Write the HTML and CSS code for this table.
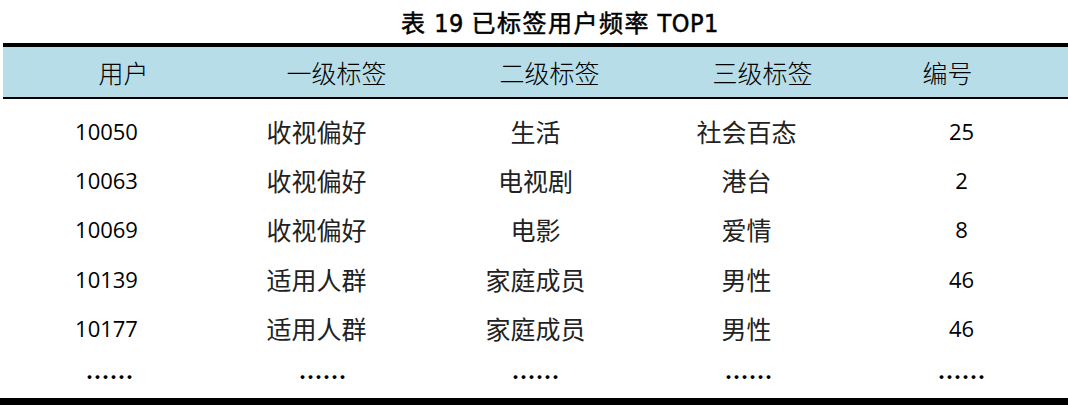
FILE: index.html
```html
<!DOCTYPE html>
<html lang="zh-CN">
<head>
<meta charset="utf-8">
<title>表 19 已标签用户频率 TOP1</title>
<link rel="stylesheet" href="styles.css">
</head>
<body>
<div class="page">
  <div class="caption">表<span class="lat"> 19 </span>已标签用户频率<span class="lat"> TOP1</span></div>
  <div class="table">
    <div class="head">
      <div class="hcell">用户</div>
      <div class="hcell">一级标签</div>
      <div class="hcell">二级标签</div>
      <div class="hcell">三级标签</div>
      <div class="hcell last">编号</div>
    </div>
    <div class="body">
      <div class="row">
        <div class="cell num">10050</div>
        <div class="cell">收视偏好</div>
        <div class="cell">生活</div>
        <div class="cell">社会百态</div>
        <div class="cell num">25</div>
      </div>
      <div class="row">
        <div class="cell num">10063</div>
        <div class="cell">收视偏好</div>
        <div class="cell">电视剧</div>
        <div class="cell">港台</div>
        <div class="cell num">2</div>
      </div>
      <div class="row">
        <div class="cell num">10069</div>
        <div class="cell">收视偏好</div>
        <div class="cell">电影</div>
        <div class="cell">爱情</div>
        <div class="cell num">8</div>
      </div>
      <div class="row">
        <div class="cell num">10139</div>
        <div class="cell">适用人群</div>
        <div class="cell">家庭成员</div>
        <div class="cell">男性</div>
        <div class="cell num">46</div>
      </div>
      <div class="row">
        <div class="cell num">10177</div>
        <div class="cell">适用人群</div>
        <div class="cell">家庭成员</div>
        <div class="cell">男性</div>
        <div class="cell num">46</div>
      </div>
      <div class="row more">
        <div class="cell">……</div>
        <div class="cell">……</div>
        <div class="cell">……</div>
        <div class="cell">……</div>
        <div class="cell">……</div>
      </div>
    </div>
  </div>
</div>
</body>
</html>
```

FILE: styles.css
```css
html, body {
  margin: 0;
  padding: 0;
  background: #ffffff;
}

body {
  width: 1068px;
  height: 405px;
  overflow: hidden;
  font-family: "Noto Sans CJK SC", sans-serif;
  color: #111;
}

.page {
  width: 1068px;
  height: 405px;
  display: flex;
  flex-direction: column;
}

.caption {
  height: 43px;
  line-height: 43px;
  padding-left: 52px;
  text-align: center;
  font-family: "Noto Sans CJK SC", sans-serif;
  font-size: 24px;
  font-weight: 400;
  -webkit-text-stroke: 0.5px #000;
  letter-spacing: 1.5px;
  color: #000;
}

.caption .lat {
  font-family: "Liberation Sans Narrow", "DejaVu Sans Condensed", sans-serif;
  font-size: 25px;
  letter-spacing: 0.5px;
  font-weight: 400;
}

.table {
  margin-left: 3px;
  width: 1065px;
  flex: 1;
  display: flex;
  flex-direction: column;
}

.head {
  display: grid;
  grid-template-columns: repeat(5, 1fr);
  align-items: center;
  height: 50px;
  background: #b7dde8;
  border-top: 4px solid #000;
  border-bottom: 2px solid #000;
}

.hcell {
  padding-left: 28px;
  text-align: center;
  font-size: 25px;
  font-weight: 300;
  color: #000;
}

.hcell.last {
  padding-left: 0;
  padding-right: 28px;
}

.body {
  flex: 1;
  padding-top: 7px;
  display: flex;
  flex-direction: column;
  border-bottom: 7px solid #000;
  margin-left: -3px;
  padding-left: 3px;
}

.row {
  display: grid;
  grid-template-columns: repeat(5, 1fr);
  align-items: center;
  height: 49.3px;
}

.row.more {
  flex: 1;
  height: auto;
}

.cell {
  text-align: center;
  font-size: 25px;
  font-weight: 400;
  color: #222;
}

.cell:nth-child(2) {
  padding-right: 12px;
}

.cell:nth-child(4) {
  padding-right: 4px;
}

.cell.num {
  font-family: "Open Sans", sans-serif;
  font-size: 22px;
  font-weight: 500;
  color: #000;
}

.cell.num:first-child {
  padding-right: 6px;
}

.more .cell {
  font-size: 24px;
  color: #000;
  font-weight: 700;
  padding-right: 0;
}
```
